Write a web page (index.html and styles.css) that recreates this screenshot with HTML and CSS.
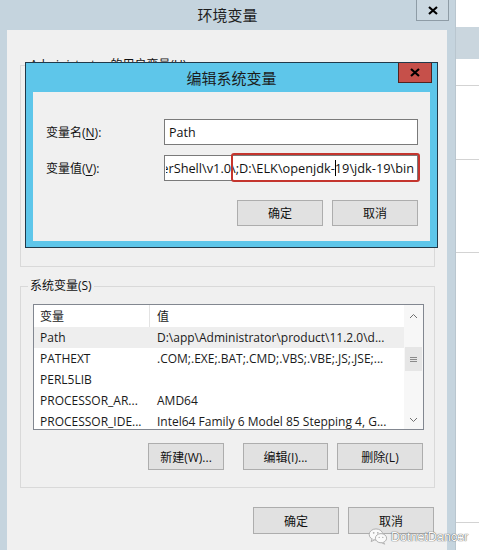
FILE: index.html
```html
<!DOCTYPE html>
<html lang="zh-CN">
<head>
<meta charset="utf-8">
<title>环境变量</title>
<link rel="stylesheet" href="styles.css">
</head>
<body>
<div class="screen">
  <div class="main-window">
    <div class="titlebar">
      <span></span>
      <span class="title">环境变量</span>
      <span class="close-outer"><svg width="10" height="9" viewBox="0 0 10 9"><path d="M1 1L9 8M9 1L1 8" stroke="#000" stroke-width="2.2"/></svg></span>
    </div>
    <div class="client">
      <fieldset class="group user-group"><legend>Administrator 的用户变量(U)</legend></fieldset>
      <fieldset class="group sys-group">
        <legend>系统变量(S)</legend>
        <div class="list">
          <div class="list-body">
            <div class="list-row list-head"><span class="cell c1">变量</span><span class="cell">值</span></div>
            <div class="list-row selected"><span class="cell c1">Path</span><span class="cell">D:\app\Administrator\product\11.2.0\d...</span></div>
            <div class="list-row"><span class="cell c1">PATHEXT</span><span class="cell">.COM;.EXE;.BAT;.CMD;.VBS;.VBE;.JS;.JSE;...</span></div>
            <div class="list-row"><span class="cell c1">PERL5LIB</span><span class="cell"></span></div>
            <div class="list-row"><span class="cell c1">PROCESSOR_AR...</span><span class="cell">AMD64</span></div>
            <div class="list-row"><span class="cell c1">PROCESSOR_IDE...</span><span class="cell">Intel64 Family 6 Model 85 Stepping 4, G...</span></div>
          </div>
          <div class="scrollbar">
            <div class="sb-btn"><svg width="9" height="6" viewBox="0 0 9 6"><path d="M1 5L4.5 1.5L8 5" fill="none" stroke="#707070" stroke-width="1"/></svg></div>
            <div class="sb-gap"></div>
            <div class="sb-thumb"><svg width="7" height="7" viewBox="0 0 7 7"><path d="M0 1.5H7M0 3.5H7M0 5.5H7" stroke="#8a8a8a" stroke-width="1"/></svg></div>
            <div class="sb-fill"></div>
            <div class="sb-btn sb-down"><svg width="9" height="6" viewBox="0 0 9 6"><path d="M1 1L4.5 4.5L8 1" fill="none" stroke="#707070" stroke-width="1"/></svg></div>
          </div>
        </div>
        <div class="btn-row">
          <span class="btn btn-new">新建(W)...</span>
          <span class="btn btn-edit">编辑(I)...</span>
          <span class="btn btn-del">删除(L)</span>
        </div>
      </fieldset>
      <div class="dialog-buttons">
        <span class="btn btn-wide">确定</span>
        <span class="btn btn-wide">取消</span>
      </div>
    </div>
  </div>
  <div class="behind">
    <div class="behind-top"></div>
    <div class="behind-band"></div>
    <div class="behind-row r1"></div>
    <div class="behind-row r2"></div>
    <div class="behind-row r3"></div>
    <div class="behind-row r4"></div>
  </div>

  <div class="edit-dialog">
    <div class="edit-titlebar">
      <span></span>
      <span class="edit-title">编辑系统变量</span>
      <span class="edit-close"><svg width="10" height="9" viewBox="0 0 10 9"><path d="M1 1L9 8M9 1L1 8" stroke="#000" stroke-width="2.2"/></svg></span>
    </div>
    <div class="edit-client">
      <div class="field-row">
        <span class="field-label">变量名(<u>N</u>):</span>
        <div class="input"><span class="input-text">Path</span></div>
      </div>
      <div class="field-row">
        <span class="field-label">变量值(<u>V</u>):</span>
        <div class="input input-value">
          <span class="value-clip"><span class="input-text">erShell\v1.0\;D:\ELK\openjdk-<span class="caret"></span>19\jdk-19\bin</span></span>
          <span class="highlight"></span>
        </div>
      </div>
      <div class="edit-buttons">
        <span class="btn btn-wide">确定</span>
        <span class="btn btn-wide">取消</span>
      </div>
    </div>
  </div>

  <div class="watermark">
    <svg width="20" height="17" viewBox="0 0 20 17">
      <ellipse cx="8" cy="6.5" rx="6.8" ry="5.6" fill="#fafafa" stroke="#b0b0b0" stroke-width="1"/>
      <path d="M4 11L3.2 13.6L6.2 12" fill="#fafafa" stroke="#b0b0b0" stroke-width="1"/>
      <ellipse cx="13" cy="10.2" rx="5.6" ry="4.6" fill="#fafafa" stroke="#b0b0b0" stroke-width="1"/>
      <path d="M15.5 14.2L16.6 16.2L13.8 14.8" fill="#fafafa" stroke="#b0b0b0" stroke-width="1"/>
      <circle cx="5.7" cy="4.8" r="0.9" fill="#b0b0b0"/>
      <circle cx="9.8" cy="4.8" r="0.9" fill="#b0b0b0"/>
      <circle cx="11.2" cy="9.4" r="0.7" fill="#b0b0b0"/>
      <circle cx="14.8" cy="9.4" r="0.7" fill="#b0b0b0"/>
    </svg>
    <span class="wm-text">DotnetDancer</span>
  </div>
</div>
</body>
</html>
```

FILE: styles.css
```css
html, body {
  margin: 0;
  padding: 0;
  background: #ffffff;
}

.screen {
  position: relative;
  width: 479px;
  height: 550px;
  display: flex;
  overflow: hidden;
  font-family: "Open Sans", "Noto Sans CJK SC", sans-serif;
  font-size: 12px;
  color: #111;
}

/* ---------- main window ---------- */
.main-window {
  flex: none;
  width: 455px;
  background: #c5d4de;
  display: flex;
  flex-direction: column;
}

.titlebar {
  height: 30px;
  flex: none;
  display: grid;
  grid-template-columns: 1fr auto 1fr;
  align-items: start;
}

.title {
  font-family: "Noto Sans CJK SC", sans-serif;
  font-size: 15px;
  line-height: 30px;
  color: #1e1e1e;
}

.close-outer {
  justify-self: end;
  margin-right: 6px;
  width: 33px;
  height: 21px;
  box-sizing: border-box;
  border: 1px solid #8e9ca6;
  border-top: none;
  background: #cbd8e1;
  display: flex;
  align-items: center;
  justify-content: center;
}

.client {
  flex: 1;
  margin: 0 8px 0 7px;
  background: #f0f0f0;
  padding: 27px 12px 0 13px;
  display: flex;
  flex-direction: column;
}

.group {
  margin: 0;
  border: 1px solid #d9d9d9;
  min-width: 0;
}

.group legend {
  padding: 0 2px;
  margin-left: -5px;
  line-height: 16px;
  color: #111;
}

.user-group {
  height: 210px;
  box-sizing: border-box;
  padding: 0 12px;
}

.sys-group {
  margin-top: 11px;
  padding: 10px 10px 17px 12px;
}

/* ---------- list ---------- */
.list {
  height: 126px;
  box-sizing: border-box;
  border: 1px solid #828790;
  background: #ffffff;
  display: flex;
}

.list-body {
  flex: 1;
  overflow: hidden;
}

.list-row {
  display: grid;
  grid-template-columns: 116px 1fr;
  height: 21px;
  align-items: stretch;
}

.list-head {
  height: 22px;
}

.cell {
  padding-left: 6px;
  display: flex;
  align-items: center;
  white-space: nowrap;
  overflow: hidden;
  color: #1a1a1a;
}

.list-head .c1 {
  border-right: 1px solid #e3e3e3;
}

.list-head .cell + .cell {
  padding-left: 6px;
}

.list-row .cell + .cell {
  padding-left: 7px;
}

.selected {
  background: #eeeeee;
}

.scrollbar {
  width: 19px;
  flex: none;
  background: #f7f7f7;
  display: flex;
  flex-direction: column;
}

.sb-btn {
  height: 21px;
  display: flex;
  align-items: center;
  justify-content: center;
}

.sb-down {
  height: 18px;
}

.sb-gap {
  height: 21px;
}

.sb-thumb {
  height: 24px;
  margin: 0 1px;
  background: #e6e6e6;
  display: flex;
  align-items: center;
  justify-content: center;
}

.sb-fill {
  flex: 1;
}

/* ---------- buttons ---------- */
.btn {
  box-sizing: border-box;
  height: 27px;
  border: 1px solid #adadad;
  background: #e1e1e1;
  display: flex;
  align-items: center;
  justify-content: center;
  color: #111;
  white-space: nowrap;
}

.btn-row {
  margin-top: 13px;
  margin-right: 1px;
  display: flex;
  justify-content: flex-end;
}

.btn-new {
  width: 76px;
}

.btn-edit {
  width: 85px;
  margin-left: 19px;
}

.btn-del {
  width: 86px;
  margin-left: 9px;
}

.btn-wide {
  width: 86px;
}

.dialog-buttons {
  margin-top: 19px;
  margin-right: 1px;
  display: flex;
  justify-content: flex-end;
  gap: 9px;
}

/* ---------- window behind ---------- */
.behind {
  flex: 1;
  background: #ffffff;
  display: flex;
  flex-direction: column;
  border-left: 1px solid #b9c6cf;
}

.behind-top {
  height: 27px;
}

.behind-band {
  height: 32px;
  background: #cad6de;
}

.behind-row {
  border-bottom: 1px solid #d3d3d3;
}

.r1 { height: 26px; }
.r2 { height: 73px; }
.r3 { height: 92px; }
.r4 { height: 269px; }

/* ---------- edit dialog (overlay window) ---------- */
.edit-dialog {
  position: absolute;
  left: 25px;
  top: 62px;
  width: 413px;
  height: 186px;
  box-sizing: border-box;
  border: 1px solid #20394a;
  background: #5ec6ea;
  display: flex;
  flex-direction: column;
}

.edit-titlebar {
  height: 29px;
  flex: none;
  display: grid;
  grid-template-columns: 1fr auto 1fr;
  align-items: start;
}

.edit-title {
  font-family: "Noto Sans CJK SC", sans-serif;
  font-size: 15px;
  line-height: 29px;
  color: #1c1c1c;
}

.edit-close {
  justify-self: end;
  margin-right: 5px;
  width: 34px;
  height: 20px;
  box-sizing: border-box;
  background: #c6504a;
  border: 1px solid #52231f;
  border-top: none;
  display: flex;
  align-items: center;
  justify-content: center;
}

.edit-client {
  flex: 1;
  margin: 0 7px 6px 7px;
  background: #f0f0f0;
  padding: 27px 12px 0 13px;
}

.field-row {
  display: flex;
  align-items: center;
  height: 26px;
}

.field-row + .field-row {
  margin-top: 10px;
}

.field-label {
  width: 118px;
  flex: none;
  color: #111;
}

.field-label u {
  text-underline-offset: 2px;
}

.input {
  flex: 1;
  height: 26px;
  box-sizing: border-box;
  border: 1px solid #7a7a7a;
  background: #ffffff;
  display: flex;
  align-items: center;
  padding: 0 4px;
  font-size: 12.5px;
  min-width: 0;
}

.input-value {
  position: relative;
  padding: 0 3px 0 1px;
  font-size: 12.75px;
}

.value-clip {
  flex: 1;
  min-width: 0;
  overflow: hidden;
  display: flex;
  justify-content: flex-end;
}

.value-clip .input-text {
  flex: none;
}

.input-text {
  white-space: nowrap;
  color: #111;
}

.caret {
  display: inline-block;
  width: 1px;
  height: 16px;
  background: #000;
  vertical-align: -3px;
  margin: 0 -1px 0 0;
}

.highlight {
  position: absolute;
  left: 66px;
  right: -3px;
  top: -3px;
  bottom: -2px;
  border: 2px solid #c4352e;
  border-radius: 3px;
}

.edit-buttons {
  margin-top: 19px;
  display: flex;
  justify-content: flex-end;
  gap: 9px;
}

.edit-buttons .btn {
  height: 26px;
}

/* ---------- watermark ---------- */
.watermark {
  position: absolute;
  left: 368px;
  top: 528px;
  display: flex;
  align-items: center;
  gap: 3px;
}

.wm-text {
  font-family: "Liberation Sans", sans-serif;
  font-size: 12.5px;
  color: #fbfbfb;
  text-shadow: 0 0 1px #555, 0 0 1px #555;
}
```
